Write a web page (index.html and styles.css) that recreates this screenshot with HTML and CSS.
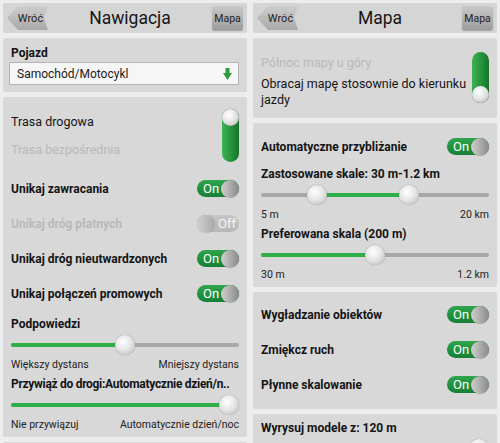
FILE: index.html
```html
<!DOCTYPE html>
<html lang="pl">
<head>
<meta charset="utf-8">
<title>Nawigacja / Mapa</title>
<link rel="stylesheet" href="styles.css">
</head>
<body>
<div class="screen">
  <section class="panel">
    <header class="bar">
      <div class="back">Wróć</div>
      <h1 class="title">Nawigacja</h1>
      <div class="map-btn">Mapa</div>
    </header>
    <div class="card card-vehicle">
      <div class="label">Pojazd</div>
      <div class="select">
        <span>Samochód/Motocykl</span>
        <svg class="select-arrow" width="9" height="12" viewBox="0 0 9 12"><rect x="2.5" y="0" width="4" height="5" fill="#2f9a3a"/><polygon points="0,5 9,5 4.5,12" fill="#2f9a3a"/></svg>
      </div>
    </div>
    <div class="card card-route">
      <div class="choice">
        <div class="choice-labels">
          <div class="opt">Trasa drogowa</div>
          <div class="opt muted">Trasa bezpośrednia</div>
        </div>
        <div class="vswitch knob-top"><span class="vknob"></span></div>
      </div>
      <div class="row"><span class="label">Unikaj zawracania</span><span class="toggle on"><span class="t-text">On</span><span class="knob"></span></span></div>
      <div class="row"><span class="label muted">Unikaj dróg płatnych</span><span class="toggle off"><span class="knob"></span><span class="t-text">Off</span></span></div>
      <div class="row"><span class="label">Unikaj dróg nieutwardzonych</span><span class="toggle on"><span class="t-text">On</span><span class="knob"></span></span></div>
      <div class="row"><span class="label">Unikaj połączeń promowych</span><span class="toggle on"><span class="t-text">On</span><span class="knob"></span></span></div>
      <div class="line label first-line">Podpowiedzi</div>
      <div class="slider" style="--p:0.5"><span class="fill"></span><span class="sknob"></span></div>
      <div class="scale"><span>Większy dystans</span><span>Mniejszy dystans</span></div>
      <div class="line label tight">Przywiąż do drogi:Automatycznie dzień/n..</div>
      <div class="slider" style="--p:1"><span class="fill"></span><span class="sknob"></span></div>
      <div class="scale"><span>Nie przywiązuj</span><span>Automatycznie dzień/noc</span></div>
    </div>
    <div class="card card-more"></div>
  </section>

  <section class="panel">
    <header class="bar">
      <div class="back">Wróć</div>
      <h1 class="title">Mapa</h1>
      <div class="map-btn">Mapa</div>
    </header>
    <div class="card card-orient">
      <div class="choice">
        <div class="choice-labels">
          <div class="opt opt-first muted">Północ mapy u góry</div>
          <div class="opt opt-wrap">Obracaj mapę stosownie do kierunku jazdy</div>
        </div>
        <div class="vswitch knob-bottom"><span class="vknob"></span></div>
      </div>
    </div>
    <div class="card card-zoom">
      <div class="row"><span class="label">Automatyczne przybliżanie</span><span class="toggle on"><span class="t-text">On</span><span class="knob"></span></span></div>
      <div class="line label">Zastosowane skale: 30 m-1.2 km</div>
      <div class="slider range" style="--a:0.22;--b:0.665"><span class="fill"></span><span class="sknob k-a"></span><span class="sknob k-b"></span></div>
      <div class="scale"><span>5 m</span><span>20 km</span></div>
      <div class="line label">Preferowana skala (200 m)</div>
      <div class="slider" style="--p:0.5"><span class="fill"></span><span class="sknob"></span></div>
      <div class="scale"><span>30 m</span><span>1.2 km</span></div>
    </div>
    <div class="card card-smooth">
      <div class="row"><span class="label">Wygładzanie obiektów</span><span class="toggle on"><span class="t-text">On</span><span class="knob"></span></span></div>
      <div class="row"><span class="label">Zmiękcz ruch</span><span class="toggle on"><span class="t-text">On</span><span class="knob"></span></span></div>
      <div class="row"><span class="label">Płynne skalowanie</span><span class="toggle on"><span class="t-text">On</span><span class="knob"></span></span></div>
    </div>
    <div class="card card-models">
      <div class="line label">Wyrysuj modele z: 120 m</div>
      <div class="slider" style="--p:1"><span class="fill"></span><span class="sknob"></span></div>
    </div>
  </section>
</div>
</body>
</html>
```

FILE: styles.css
```css
* { box-sizing: border-box; }
html, body { margin: 0; padding: 0; }
body {
  background: #ededed;
  font-family: Roboto, "Liberation Sans", sans-serif;
  color: #141414;
}
.screen {
  display: grid;
  grid-template-columns: 250px 250px;
  width: 500px;
  height: 443px;
  overflow: hidden;
}
.panel {
  display: flex;
  flex-direction: column;
  gap: 5px;
  padding: 3px;
  min-width: 0;
}
.bar {
  display: flex;
  align-items: center;
  height: 30px;
  flex: none;
  padding: 0 4px;
  background: #d5d5d5;
  border-radius: 2px;
}
.back {
  width: 41px;
  height: 24px;
  flex: none;
  display: flex;
  align-items: center;
  justify-content: center;
  padding-left: 6px;
  font-size: 11px;
  color: #1e1e1e;
  background: linear-gradient(#cdcdcd, #a9a9a9);
  clip-path: polygon(0 50%, 11px 0, 100% 0, calc(100% - 4px) 50%, 100% 100%, 11px 100%);
}
.title {
  flex: 1;
  margin: 0;
  text-align: center;
  font-size: 17.5px;
  font-weight: 400;
  color: #151515;
}
.map-btn {
  width: 31px;
  height: 24px;
  flex: none;
  display: flex;
  align-items: center;
  justify-content: center;
  font-size: 10.5px;
  color: #1e1e1e;
  background: linear-gradient(#c9c9c9, #9d9d9d);
  border-radius: 2px;
  box-shadow: 0 1px 1px rgba(0,0,0,0.25);
}
.card {
  background: #d8d8d8;
  border-radius: 2px;
  padding: 0 8px;
  flex: none;
}
.label {
  font-size: 12px;
  font-weight: 700;
  color: #141414;
}
.tight { letter-spacing: -0.3px; }
.muted { color: #b9b9b9 !important; }

/* vehicle */
.card-vehicle { padding-top: 6px; padding-bottom: 7px; }
.card-vehicle .label { line-height: 18px; }
.select {
  height: 23px;
  margin-left: -2px;
  display: flex;
  align-items: center;
  justify-content: space-between;
  padding: 0 6px 0 7px;
  background: #f6f6f6;
  border: 1px solid #b4b4b4;
  font-size: 12px;
  color: #1a1a1a;
}
.select-arrow { margin-top: 1px; }

/* vertical choice */
.card-route { padding-top: 11px; padding-bottom: 3px; }
.choice {
  display: flex;
  justify-content: space-between;
  align-items: flex-start;
}
.card-route .choice { margin-bottom: 7px; }
.opt {
  font-size: 12.5px;
  line-height: 28px;
  color: #151515;
}
.vswitch {
  position: relative;
  width: 17px;
  height: 53px;
  margin-top: 1px;
  border-radius: 9px;
  background: linear-gradient(to right, #3cb455, #1f8a35 70%, #17712b);
  flex: none;
}
.vknob {
  position: absolute;
  left: 0;
  width: 17px;
  height: 17px;
  border-radius: 50%;
  background: radial-gradient(circle at 40% 35%, #ffffff, #e2e2e2 50%, #aaaaaa);
  box-shadow: 0 0 1px rgba(0,0,0,0.4);
}
.knob-top .vknob { top: 0; }
.knob-bottom .vknob { bottom: 0; }

.card-orient { padding-top: 15px; padding-bottom: 10px; }
.card-orient .choice-labels { width: 215px; }
.opt-first { line-height: 20px; }
.opt-wrap { line-height: 16px; margin-top: 3px; }
.card-orient .vswitch { height: 51px; margin-top: -1px; }

/* toggle rows */
.row {
  height: 35px;
  display: flex;
  align-items: center;
  justify-content: space-between;
}
.toggle {
  display: inline-flex;
  align-items: center;
  width: 42px;
  height: 17px;
  border-radius: 9px;
  flex: none;
}
.toggle.on {
  background: linear-gradient(#2fa54c, #168036);
}
.toggle .t-text {
  flex: 1;
  font-size: 13px;
  color: #ffffff;
  padding-left: 6px;
  line-height: 17px;
}
.toggle .knob {
  width: 18px;
  height: 18px;
  border-radius: 50%;
  background: linear-gradient(to right, #cfcfcf, #8a8a8a);
  box-shadow: 0 0 1px rgba(0,0,0,0.3);
}
.toggle.off {
  background: linear-gradient(#c6c6c6, #b8b8b8);
}
.toggle.off .knob {
  background: linear-gradient(to right, #d0d0d0, #a8a8a8);
}
.toggle.off .t-text { padding-left: 3px; color: #f7f7f7; }

/* sliders */
.line { line-height: 20px; height: 20px; white-space: nowrap; }
.first-line { margin-top: 3px; }
.slider {
  position: relative;
  height: 22px;
}
.slider::before {
  content: "";
  position: absolute;
  left: 0; right: 0;
  top: 9px;
  height: 4px;
  border-radius: 2px;
  background: #a8a8a8;
}
.slider .fill {
  position: absolute;
  left: 0;
  top: 9px;
  height: 4px;
  border-radius: 2px;
  background: #2fad48;
  width: calc((100% - 20px) * var(--p) + 10px);
}
.sknob {
  position: absolute;
  top: 1px;
  width: 20px;
  height: 20px;
  border-radius: 50%;
  background: radial-gradient(circle at 40% 35%, #ffffff, #e6e6e6 45%, #b3b3b3);
  box-shadow: 0 0 1px rgba(0,0,0,0.5);
  left: calc((100% - 20px) * var(--p));
}
.range .fill {
  left: calc((100% - 20px) * var(--a) + 10px);
  width: calc((100% - 20px) * (var(--b) - var(--a)));
}
.range .k-a { left: calc((100% - 20px) * var(--a)); }
.range .k-b { left: calc((100% - 20px) * var(--b)); }
.scale {
  display: flex;
  justify-content: space-between;
  font-size: 10.5px;
  line-height: 18px;
  color: #222;
}

.card-zoom { padding-top: 6px; padding-bottom: 3px; }
.card-smooth { padding-top: 5px; padding-bottom: 7px; }
.card-models { padding-top: 4px; padding-bottom: 10px; }
.card-more { height: 40px; }
```
